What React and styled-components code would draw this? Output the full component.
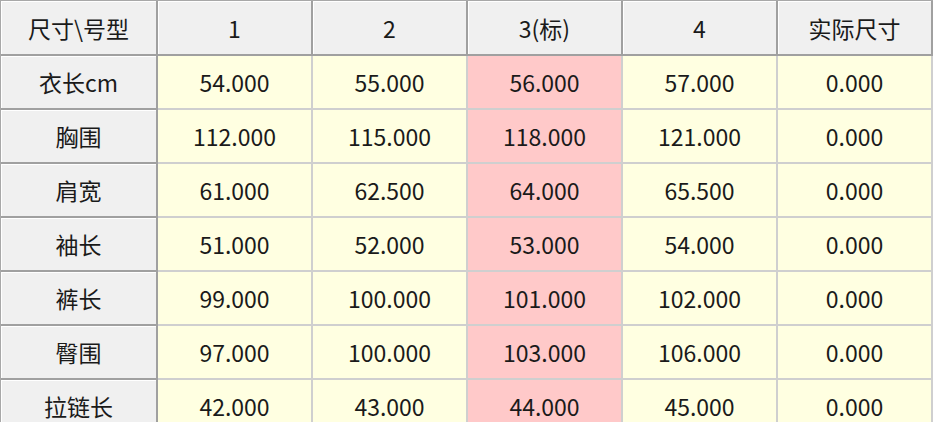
import React from "react";
import styled, { createGlobalStyle } from "styled-components";

const Global = createGlobalStyle`
  html, body { margin: 0; padding: 0; background: #ffffff; overflow: hidden; }
  body { font-family: "Noto Sans CJK SC", "Noto Sans", sans-serif; }
`;

const Grid = styled.div`
  display: grid;
  grid-template-columns: 157px repeat(5, 155px);
  grid-template-rows: 55px;
  grid-auto-rows: 54px;
  width: 932px;
  border-top: 1px solid #a8a8a8;
  border-left: 1px solid #a8a8a8;
  background: #f0f0f0;
`;

const HeadCell = styled.div`
  display: flex;
  align-items: center;
  justify-content: center;
  background: #f0f0f0;
  border-right: 2px solid #a0a0a0;
  border-bottom: 2px solid #a0a0a0;
  box-shadow: inset 1px 1px 0 #ffffff;
  font-size: 23px;
  color: #1a1a1a;
  box-sizing: border-box;
`;

const DataCell = styled.div`
  display: flex;
  align-items: center;
  justify-content: center;
  background: ${(p) => (p.$std ? "#ffc9c9" : "#ffffe1")};
  border-right: 2px solid #cfcfcf;
  border-bottom: 2px solid #cfcfcf;
  font-size: 23px;
  color: #1a1a1a;
  box-sizing: border-box;
`;

const headers = ["尺寸\\号型", "1", "2", "3(标)", "4", "实际尺寸"];

const rows = [
  ["衣长cm", "54.000", "55.000", "56.000", "57.000", "0.000"],
  ["胸围", "112.000", "115.000", "118.000", "121.000", "0.000"],
  ["肩宽", "61.000", "62.500", "64.000", "65.500", "0.000"],
  ["袖长", "51.000", "52.000", "53.000", "54.000", "0.000"],
  ["裤长", "99.000", "100.000", "101.000", "102.000", "0.000"],
  ["臀围", "97.000", "100.000", "103.000", "106.000", "0.000"],
  ["拉链长", "42.000", "43.000", "44.000", "45.000", "0.000"],
];

export default function App() {
  return (
    <>
      <Global />
      <Grid>
        {headers.map((h) => (
          <HeadCell key={h}>{h}</HeadCell>
        ))}
        {rows.map((r) => (
          <React.Fragment key={r[0]}>
            <HeadCell>{r[0]}</HeadCell>
            {r.slice(1).map((v, i) => (
              <DataCell key={i} $std={i === 2}>
                {v}
              </DataCell>
            ))}
          </React.Fragment>
        ))}
      </Grid>
    </>
  );
}
